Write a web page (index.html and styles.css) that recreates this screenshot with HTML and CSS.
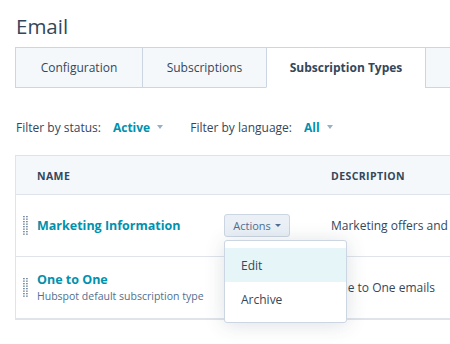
FILE: index.html
```html
<!DOCTYPE html>
<html>
<head>
<meta charset="utf-8">
<link rel="stylesheet" href="styles.css">
</head>
<body>
<div class="page">
  <h1 class="title">Email</h1>
  <div class="tabs">
    <div class="tab tab-config">Configuration</div>
    <div class="tab tab-subs">Subscriptions</div>
    <div class="tab tab-types active">Subscription Types</div>
    <div class="tab tab-more"></div>
  </div>
  <div class="filters">
    <span class="filter-label">Filter by status:</span>
    <span class="filter-value">Active <span class="caret light"></span></span>
    <span class="filter-label lang">Filter by language:</span>
    <span class="filter-value">All <span class="caret light"></span></span>
  </div>
  <div class="table">
    <div class="row head">
      <div class="cell name-col head-name">NAME</div>
      <div class="cell desc-col">DESCRIPTION</div>
    </div>
    <div class="row body-row">
      <div class="cell name-col">
        <svg class="handle" width="5" height="19" viewBox="0 0 5 19"><g fill="#7a8fa6"><rect x="0" y="0" width="1.8" height="1.3"/><rect x="3" y="0" width="1.8" height="1.3"/><rect x="0" y="2.5" width="1.8" height="1.3"/><rect x="3" y="2.5" width="1.8" height="1.3"/><rect x="0" y="5" width="1.8" height="1.3"/><rect x="3" y="5" width="1.8" height="1.3"/><rect x="0" y="7.5" width="1.8" height="1.3"/><rect x="3" y="7.5" width="1.8" height="1.3"/><rect x="0" y="10" width="1.8" height="1.3"/><rect x="3" y="10" width="1.8" height="1.3"/><rect x="0" y="12.5" width="1.8" height="1.3"/><rect x="3" y="12.5" width="1.8" height="1.3"/><rect x="0" y="15" width="1.8" height="1.3"/><rect x="3" y="15" width="1.8" height="1.3"/><rect x="0" y="17.5" width="1.8" height="1.3"/><rect x="3" y="17.5" width="1.8" height="1.3"/></g></svg>
        <div class="name-text">
          <a class="name-link">Marketing Information</a>
        </div>
        <div class="actions-wrap">
          <button class="actions">Actions <span class="caret dark"></span></button>
          <div class="menu">
            <div class="menu-item hover">Edit</div>
            <div class="menu-item">Archive</div>
          </div>
        </div>
      </div>
      <div class="cell desc-col desc">Marketing offers and</div>
    </div>
    <div class="row body-row">
      <div class="cell name-col">
        <svg class="handle" width="5" height="19" viewBox="0 0 5 19"><g fill="#7a8fa6"><rect x="0" y="0" width="1.8" height="1.3"/><rect x="3" y="0" width="1.8" height="1.3"/><rect x="0" y="2.5" width="1.8" height="1.3"/><rect x="3" y="2.5" width="1.8" height="1.3"/><rect x="0" y="5" width="1.8" height="1.3"/><rect x="3" y="5" width="1.8" height="1.3"/><rect x="0" y="7.5" width="1.8" height="1.3"/><rect x="3" y="7.5" width="1.8" height="1.3"/><rect x="0" y="10" width="1.8" height="1.3"/><rect x="3" y="10" width="1.8" height="1.3"/><rect x="0" y="12.5" width="1.8" height="1.3"/><rect x="3" y="12.5" width="1.8" height="1.3"/><rect x="0" y="15" width="1.8" height="1.3"/><rect x="3" y="15" width="1.8" height="1.3"/><rect x="0" y="17.5" width="1.8" height="1.3"/><rect x="3" y="17.5" width="1.8" height="1.3"/></g></svg>
        <div class="name-text">
          <a class="name-link">One to One</a>
          <div class="sub">Hubspot default subscription type</div>
        </div>
      </div>
      <div class="cell desc-col desc">One to One emails</div>
    </div>
  </div>
</div>
</body>
</html>
```

FILE: styles.css
```css
html, body {
  margin: 0;
  padding: 0;
  background: #ffffff;
  overflow: hidden;
}
body {
  font-family: "Open Sans", "Liberation Sans", sans-serif;
  color: #33475b;
  width: 450px;
  height: 344px;
}
.page {
  padding-left: 15px;
  width: 640px;
}
.title {
  font-size: 20.5px;
  font-weight: 400;
  line-height: 28px;
  margin: 12px 0 7px 1px;
  color: #33475b;
}
.tabs {
  display: flex;
  height: 41px;
}
.tab {
  box-sizing: border-box;
  height: 41px;
  background: #f5f8fa;
  border: 1px solid #cbd6e2;
  border-right: none;
  display: flex;
  align-items: center;
  justify-content: center;
  font-size: 12px;
  color: #33475b;
}
.tab-config { width: 127px; }
.tab-subs { width: 124px; }
.tab-types { width: 159px; }
.tab-more { width: 120px; }
.tab.active {
  background: #ffffff;
  border-bottom-color: #ffffff;
  font-weight: 700;
}
.filters {
  display: flex;
  align-items: center;
  height: 20px;
  margin-top: 29px;
  padding-left: 1px;
  font-size: 12px;
}
.filter-label {
  color: #33475b;
}
.filter-label.lang {
  margin-left: 27px;
}
.filter-value {
  color: #0091ae;
  font-weight: 700;
  margin-left: 12px;
  display: inline-flex;
  align-items: center;
}
.caret {
  display: inline-block;
  width: 0;
  height: 0;
  border-left: 3.5px solid transparent;
  border-right: 3.5px solid transparent;
  border-top: 4px solid #99afc4;
  margin-left: 7px;
}
.caret.dark {
  border-top-color: #506e91;
  margin-left: 4px;
  border-left-width: 3px;
  border-right-width: 3px;
  border-top-width: 3.5px;
}
.table {
  margin-top: 18px;
  border: 1px solid #dfe3eb;
  border-right: none;
  width: 620px;
}
.row {
  display: flex;
}
.row.head {
  background: #f5f8fa;
  height: 37px;
  align-items: center;
  border-bottom: 1px solid #dfe3eb;
  font-size: 10.5px;
  font-weight: 700;
  letter-spacing: 0.4px;
  padding-top: 1px;
  box-sizing: content-box;
}
.body-row {
  height: 61px;
  border-bottom: 1px solid #dfe3eb;
  align-items: center;
}
.cell {
  box-sizing: border-box;
}
.name-col {
  width: 299px;
  flex: none;
  display: flex;
  align-items: center;
  padding: 0 25px 0 7px;
}
.head-name {
  padding-left: 21px;
}
.desc-col {
  padding-left: 16px;
  white-space: nowrap;
}
.desc {
  font-size: 12px;
  color: #33475b;
}
.handle {
  flex: none;
  display: block;
}
.name-text {
  margin-left: 9px;
  flex: 1;
}
.name-link {
  display: block;
  color: #0091ae;
  font-weight: 700;
  font-size: 12.5px;
  line-height: 16px;
}
.sub {
  font-size: 10.5px;
  color: #516f90;
  line-height: 16px;
}
.actions-wrap {
  position: relative;
  flex: none;
}
.actions {
  box-sizing: border-box;
  width: 66px;
  height: 23px;
  border: 1px solid #cbd6e2;
  border-radius: 3px;
  background: #eaf0f6;
  color: #506e91;
  font-family: "Open Sans", "Liberation Sans", sans-serif;
  font-size: 11px;
  padding: 0;
  display: flex;
  align-items: center;
  justify-content: center;
}
.menu {
  position: absolute;
  top: 26px;
  left: 0;
  width: 123px;
  box-sizing: border-box;
  background: #ffffff;
  border: 1px solid #cbd6e2;
  border-radius: 3px;
  box-shadow: 0 2px 20px rgba(45, 62, 80, 0.16);
  padding: 7px 0 6px;
  z-index: 5;
}
.menu-item {
  height: 34px;
  display: flex;
  align-items: center;
  padding-left: 16px;
  font-size: 12px;
  color: #33475b;
}
.menu-item.hover {
  background: #e5f5f8;
}
```
